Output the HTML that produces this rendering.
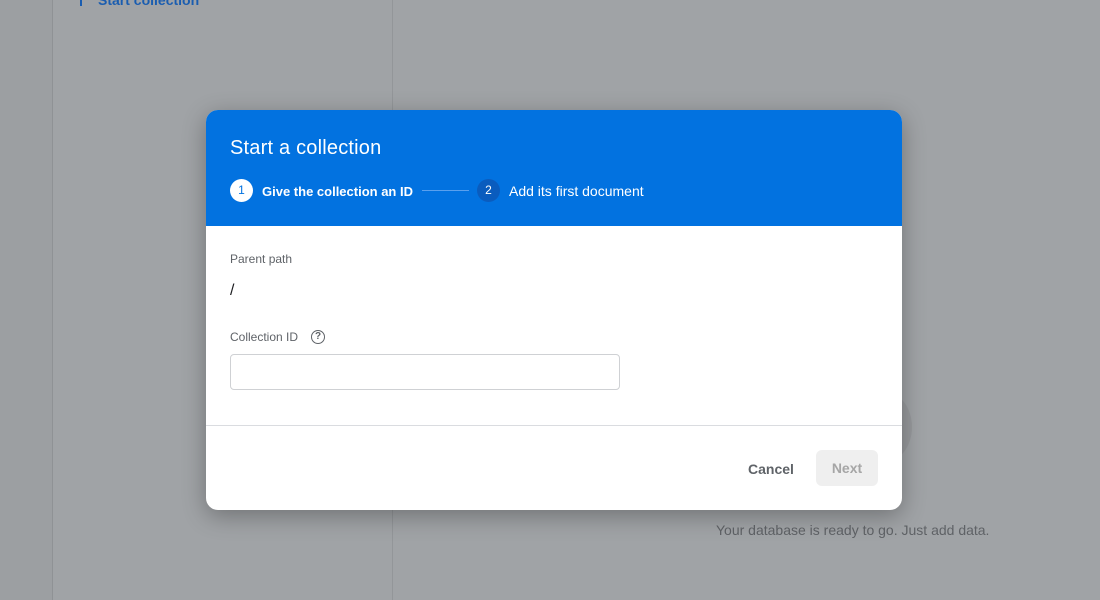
<!DOCTYPE html>
<html><head><meta charset="utf-8"><style>
*{box-sizing:border-box;margin:0;padding:0}
body{width:1100px;height:600px;overflow:hidden;background:#a0a3a6;font-family:"Liberation Sans",Roboto,sans-serif;position:relative}
.strip{position:absolute;left:0;top:0;width:53px;height:600px;background:#9c9fa2;border-right:1px solid #8f9295}
.vl{position:absolute;left:392px;top:0;width:1px;height:600px;background:#939699}
.sc{position:absolute;left:98px;top:-8px;color:#1a5db0;font-size:14px;font-weight:bold}
.bar{position:absolute;left:80px;top:-4px;width:2px;height:10px;background:#1a5db0}
.ready{position:absolute;left:716px;top:522px;color:#5f6266;font-size:14px}
.ghost{position:absolute;left:858px;top:392px;width:54px;height:70px;border-radius:50%;background:#97999c}
.dlg{position:absolute;left:206px;top:110px;width:696px;height:400px;background:#fff;border-radius:12px;overflow:hidden;box-shadow:0 6px 24px rgba(0,0,0,.3)}
.hd{height:116px;background:#0272e0;color:#fff;position:relative}
.hd h1{position:absolute;left:24px;top:27px;font-size:20px;font-weight:normal;letter-spacing:0.2px}
.c{position:absolute;top:69px;width:23px;height:23px;border-radius:50%;font-size:12px;text-align:center;line-height:23px}
.c1{left:24px;background:#fff;color:#0272e0}
.c2{left:271px;background:#0a5cbe;color:#fff}
.t{position:absolute;top:73px;font-size:14px}
.line{position:absolute;left:216px;top:80px;width:47px;height:1px;background:#5aa0ee}
.lbl{position:absolute;left:24px;font-size:12px;color:#5f6368}
.inp{position:absolute;left:24px;top:244px;width:390px;height:36px;border:1px solid #cfd1d4;border-radius:4px}
.sep{position:absolute;left:0;top:315px;width:100%;height:1px;background:#dadce0}
.cancel{position:absolute;left:542px;top:351px;font-size:14px;font-weight:bold;color:#5f6368}
.next{position:absolute;left:610px;top:340px;width:62px;height:36px;border-radius:6px;background:#efefef;color:#a6a6a6;font-size:14px;font-weight:bold;text-align:center;line-height:36px}
.q{position:absolute;left:105px;top:220px;width:14px;height:14px;border:1.5px solid #5f6368;border-radius:50%;font-size:10px;text-align:center;line-height:11px;color:#5f6368;font-weight:bold}
</style></head><body>
<div class="strip"></div><div class="vl"></div>
<div class="ghost"></div>
<div class="bar"></div><div class="sc">Start collection</div>
<div class="ready">Your database is ready to go. Just add data.</div>
<div class="dlg">
 <div class="hd">
  <h1>Start a collection</h1>
  <div class="c c1">1</div><div class="t" style="left:56px;top:74px;font-weight:bold;font-size:13px">Give the collection an ID</div>
  <div class="line"></div>
  <div class="c c2">2</div><div class="t" style="left:303px">Add its first document</div>
 </div>
 <div class="lbl" style="top:142px">Parent path</div>
 <div style="position:absolute;left:24px;top:172px;font-size:16px;color:#202124">/</div>
 <div class="lbl" style="top:220px">Collection ID</div>
 <div class="q">?</div>
 <div class="inp"></div>
 <div class="sep"></div>
 <div class="cancel">Cancel</div>
 <div class="next">Next</div>
</div>
</body></html>
